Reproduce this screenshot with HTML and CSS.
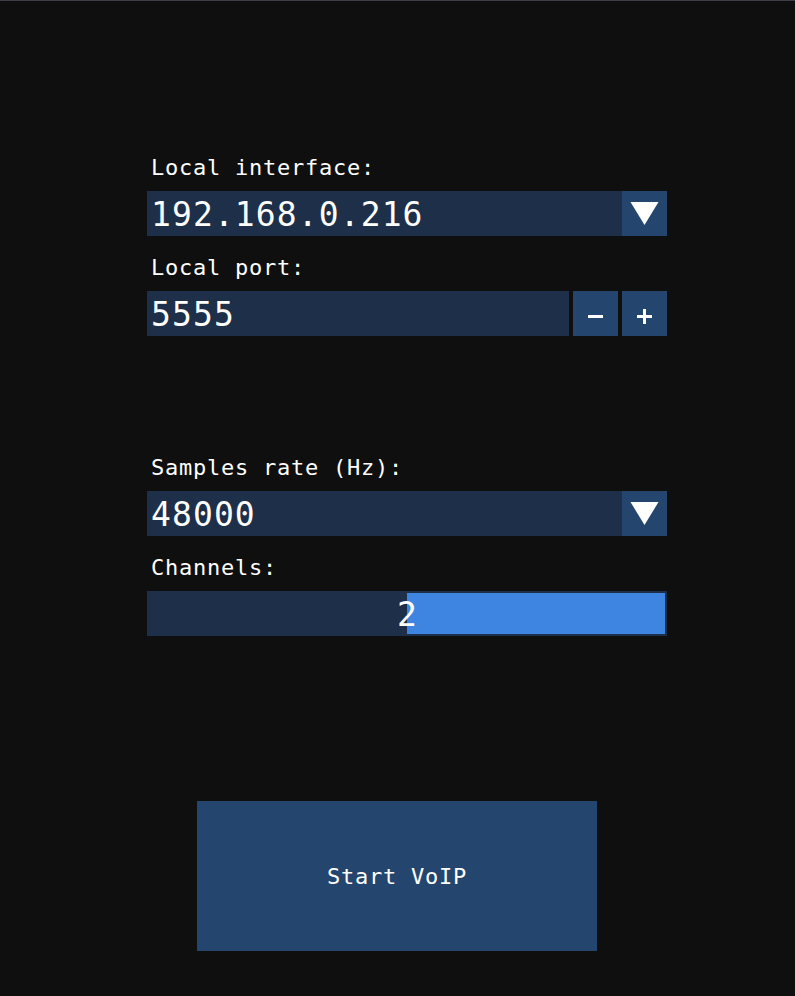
FILE: index.html
```html
<!DOCTYPE html>
<html lang="en">
<head>
<meta charset="utf-8">
<title>VoIP</title>
<link rel="stylesheet" href="styles.css">
</head>
<body>
<div class="window">
  <div class="panel">
    <div class="label">Local interface:</div>
    <div class="combo gap-small">
      <div class="field">192.168.0.216</div>
      <div class="arrow-btn">
        <svg width="45" height="45" viewBox="0 0 45 45"><polygon points="8.5,11 36.5,11 22.5,34" fill="#fff"/></svg>
      </div>
    </div>
    <div class="label">Local port:</div>
    <div class="input-row gap-large">
      <div class="field">5555</div>
      <button class="step-btn" aria-label="-">
        <svg width="45" height="45" viewBox="0 0 45 45"><rect x="15" y="24" width="15" height="3" fill="#fff"/></svg>
      </button>
      <button class="step-btn" aria-label="+">
        <svg width="45" height="45" viewBox="0 0 45 45"><rect x="15" y="24" width="15" height="3" fill="#fff"/><rect x="21" y="18" width="3" height="15" fill="#fff"/></svg>
      </button>
    </div>
    <div class="label">Samples rate (Hz):</div>
    <div class="combo gap-small">
      <div class="field">48000</div>
      <div class="arrow-btn">
        <svg width="45" height="45" viewBox="0 0 45 45"><polygon points="8.5,11 36.5,11 22.5,34" fill="#fff"/></svg>
      </div>
    </div>
    <div class="label">Channels:</div>
    <div class="slider gap-button">
      <div class="grab" style="left: 50%;"></div>
      <span class="slider-value">2</span>
    </div>
    <button class="start-btn">Start VoIP</button>
  </div>
</div>
</body>
</html>
```

FILE: styles.css
```css
html, body {
  margin: 0;
  padding: 0;
  background: #0f0f0f;
}
body {
  width: 795px;
  height: 996px;
  overflow: hidden;
  font-family: "DejaVu Sans Mono", "Liberation Mono", monospace;
  color: #ffffff;
}
.window {
  height: 995px;
  border-top: 1px solid #3c3c44;
}
.panel {
  display: flex;
  flex-direction: column;
  padding: 154px 0 0 147px;
  width: 520px;
}
.label {
  height: 26px;
  line-height: 26px;
  font-size: 22px;
  letter-spacing: 0.76px;
  padding-left: 4px;
  margin-bottom: 10px;
  white-space: pre;
}
.combo, .input-row {
  display: flex;
  height: 45px;
  gap: 4px;
}
.combo { gap: 0; }
.gap-small { margin-bottom: 19px; }
.gap-large { margin-bottom: 119px; }
.gap-button { margin-bottom: 165px; }
.field {
  flex: 1;
  height: 45px;
  background: #1d2f49;
  font-size: 33px;
  line-height: 47px;
  letter-spacing: 1.1px;
  padding-left: 4px;
  overflow: hidden;
  white-space: pre;
}
.arrow-btn, .step-btn {
  width: 45px;
  height: 45px;
  flex: 0 0 45px;
  background: #24456d;
  border: 0;
  padding: 0;
  margin: 0;
}
.arrow-btn svg, .step-btn svg {
  display: block;
}
.slider {
  position: relative;
  height: 45px;
  background: #1d2f49;
  text-align: center;
  font-size: 33px;
  line-height: 47px;
}
.grab {
  position: absolute;
  top: 2px;
  bottom: 2px;
  right: 2px;
  background: #3d85e0;
}
.slider-value {
  position: relative;
}
.start-btn {
  margin-left: 50px;
  width: 400px;
  height: 150px;
  background: #24456d;
  border: 0;
  padding: 2px 0 0 0;
  color: #ffffff;
  font-family: "DejaVu Sans Mono", "Liberation Mono", monospace;
  font-size: 22px;
  line-height: 26px;
  letter-spacing: 0.76px;
}
```
